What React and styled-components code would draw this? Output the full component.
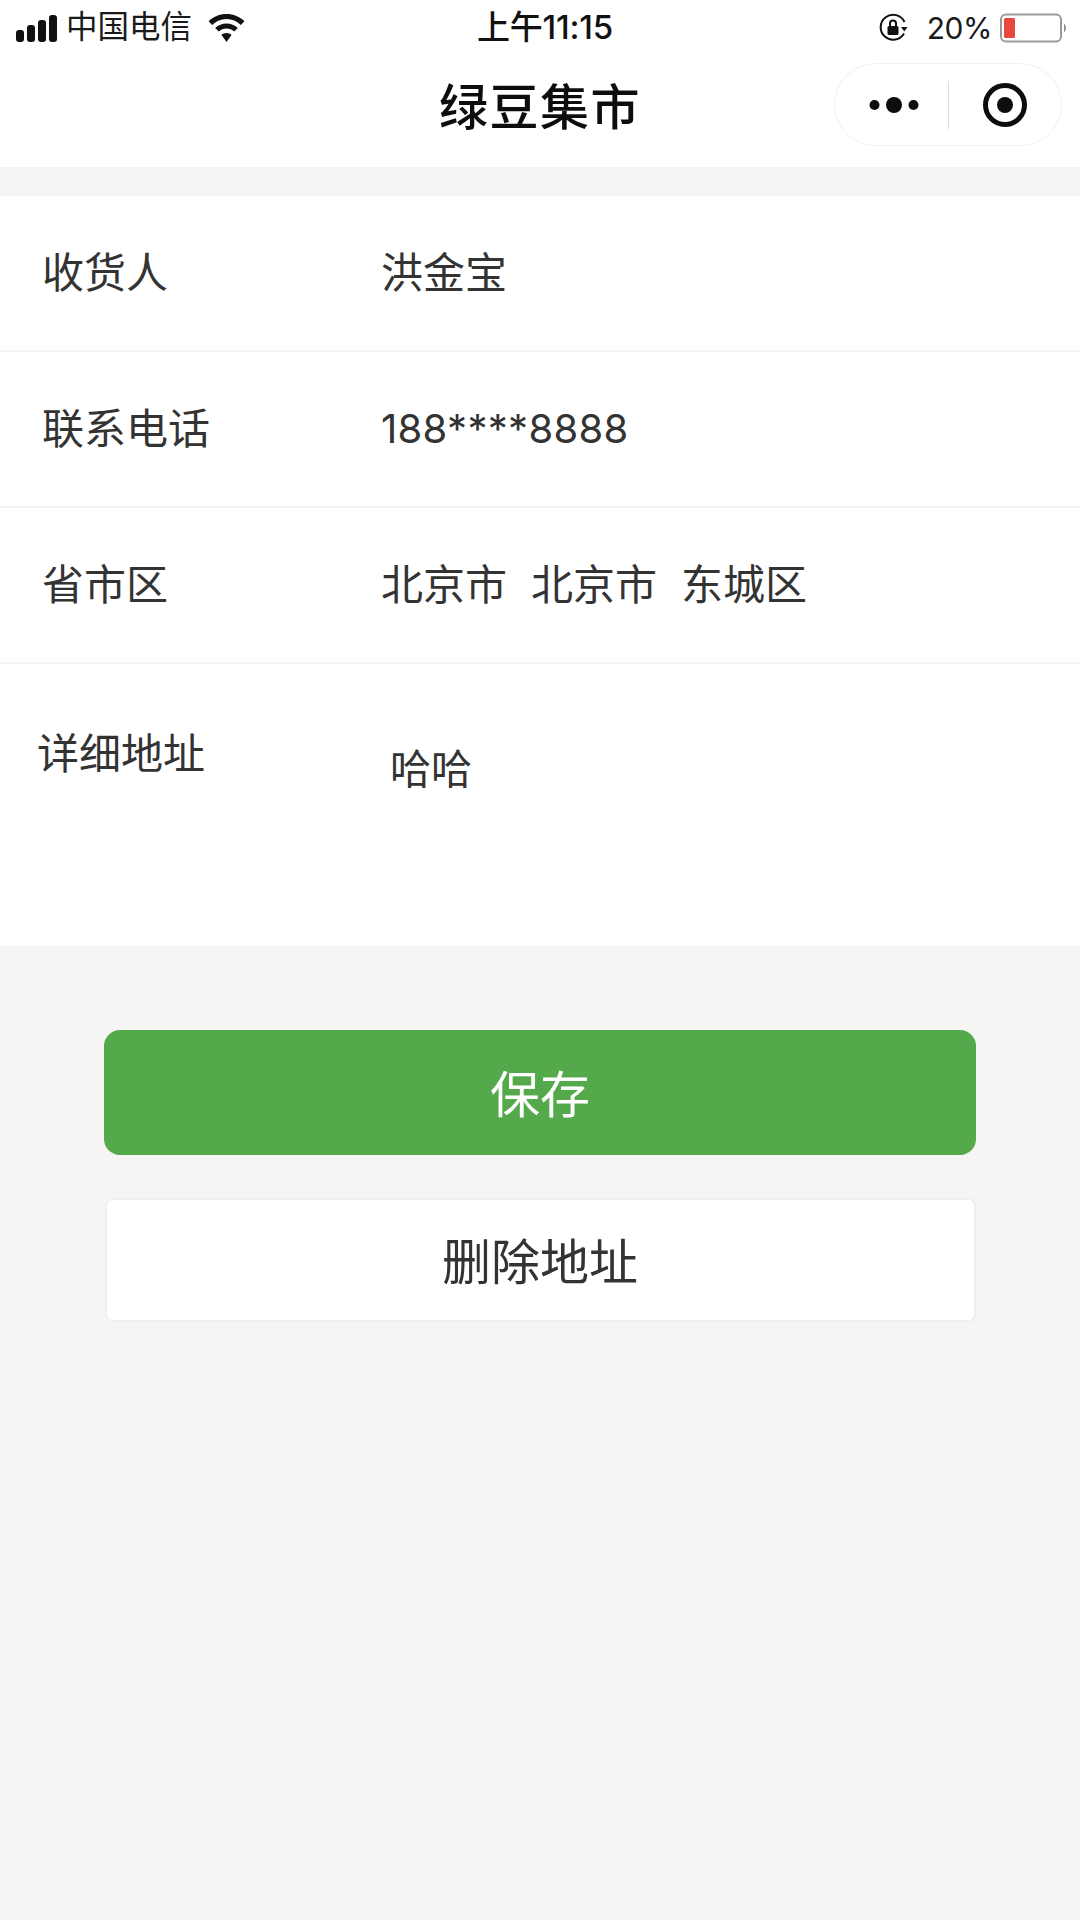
import React from "react";
import styled, { createGlobalStyle } from "styled-components";

const Global = createGlobalStyle`
  html, body { margin: 0; padding: 0; background: #f6f5f4; }
  body { font-family: "Liberation Sans", "Noto Sans CJK SC", sans-serif; }
`;
const Page = styled.div`
  width: 1080px; height: 1920px; background: #f6f5f4; overflow: hidden;
  display: flex; flex-direction: column;
`;
const Header = styled.header`
  background: #fff; height: 167px; display: flex; flex-direction: column;
`;
const StatusBar = styled.div`
  height: 56px; padding: 0 12px 0 16px; display: grid;
  grid-template-columns: 1fr auto 1fr; align-items: center; color: #111;
`;
const StatusLeft = styled.div`display: flex; align-items: center; gap: 9px;`;
const StatusRight = styled.div`display: flex; align-items: center; justify-content: flex-end;`;
const Carrier = styled.span`
  font: 400 31.5px/1 "Noto Sans CJK SC", sans-serif; margin: 0 7px 6px -1px; color: #1a1a1a;
`;
const Time = styled.span`
  font: 500 33px/1 "Inter", "Noto Sans CJK SC", sans-serif; letter-spacing: -0.2px;
  margin: 0 0 1px 6px;
`;
const Percent = styled.span`
  font: 400 30px/1 "Inter", sans-serif; margin: 0 8px 0 18px; color: #1a1a1a; letter-spacing: -0.5px;
`;
const NavBar = styled.div`
  flex: 1; display: grid; grid-template-columns: 1fr auto 1fr; align-items: center;
`;
const Title = styled.h1`
  grid-column: 2; margin: 0 0 16px; font: 500 49px/1 "Noto Sans CJK SC", sans-serif;
  letter-spacing: 1.5px; color: #0d0d0d;
`;
const Capsule = styled.div`
  grid-column: 3; justify-self: end; box-sizing: border-box; width: 228px; height: 83px;
  margin: 0 18px 14px 0; border: 1px solid #f1f1f1; border-radius: 42px; display: grid;
  grid-template-columns: 1fr 1px 1fr; align-items: center; justify-items: center;
`;
const DotsSlot = styled.div`display: flex; padding-left: 6px;`;
const CapsuleDivider = styled.div`width: 1px; height: 48px; background: #dcdcdc;`;
const Form = styled.section`background: #fff; margin-top: 29px; display: flex; flex-direction: column;`;
const Row = styled.div`
  box-sizing: border-box; height: 156px; display: flex; align-items: center; padding: 0 0 6px 42px;
  border-bottom: 2px solid #f5f4f4; font: 400 42px/1 "Noto Sans CJK SC", sans-serif; color: #333;
`;
const Label = styled.span`width: 339px; flex: none;`;
const Value = styled.span`display: flex; gap: 24px;`;
const Digits = styled.span`
  padding-top: 6px; font: 400 40px/1 "Inter", "Noto Sans", sans-serif; letter-spacing: 0.3px; color: #333;
`;
const AddressRow = styled.div`
  height: 282px; display: flex; align-items: flex-start; padding-left: 37px;
  font: 400 42px/1 "Noto Sans CJK SC", sans-serif; color: #333;
`;
const AddressLabel = styled.span`width: 353px; flex: none; margin-top: 66px;`;
const AddressValue = styled.span`margin-top: 82px; font-size: 41px;`;
const Actions = styled.div`
  display: flex; flex-direction: column; align-items: center; gap: 43px; margin-top: 84px;
`;
const Primary = styled.button`
  width: 872px; height: 125px; border: none; border-radius: 16px; background: #54a94b;
  color: #fff; font: 400 50px/1 "Noto Sans CJK SC", sans-serif; padding: 0 0 4px;
`;
const Secondary = styled.button`
  box-sizing: border-box; width: 871px; height: 124px; border: 2px solid #f0efef; border-radius: 8px;
  background: #fff; color: #333; font: 400 49px/1 "Noto Sans CJK SC", sans-serif; padding: 0 0 3px;
`;

const Signal = () => (
  <svg width="42" height="27" viewBox="0 0 42 27" fill="#111">
    <rect x="0" y="15" width="8" height="12" rx="3" />
    <rect x="11" y="10" width="8" height="17" rx="3" />
    <rect x="22" y="5" width="8" height="22" rx="3" />
    <rect x="33" y="0" width="8" height="27" rx="3" />
  </svg>
);
const Wifi = () => (
  <svg width="37" height="28" viewBox="0 0 37 28" fill="#111">
    <path d="M18.5 0C11.5 0 5.3 2.7.6 7.200l3.600 3.700C8 7.300 13 5.100 18.500 5.100s10.500 2.200 14.300 5.800l3.600-3.700C31.700 2.700 25.500 0 18.500 0z" />
    <path d="M18.500 9.500c-4.400 0-8.300 1.700-11.300 4.400l3.600 3.700c2-1.800 4.700-3 7.700-3s5.700 1.200 7.700 3l3.600-3.700c-3-2.700-6.900-4.400-11.300-4.400z" />
    <path d="M18.500 19c-2 0-3.600.7-5 1.900l5 7.100 5-7.100c-1.400-1.200-3-1.900-5-1.900z" />
  </svg>
);
const RotationLock = () => (
  <svg width="30" height="30" viewBox="0 0 30 30" fill="none">
    <path d="M25 20.500A12.500 12.500 0 1 1 25.500 9" stroke="#111" strokeWidth="2" />
    <path d="M22 14l6.500 0-3.200 4.500z" fill="#111" />
    <rect x="8.500" y="13" width="11" height="9" rx="1.500" fill="#111" />
    <path d="M11 13v-2.500a3 3 0 0 1 6 0V13" stroke="#111" strokeWidth="2" />
  </svg>
);
const Battery = () => (
  <svg width="68" height="30" viewBox="0 0 68 30" fill="none">
    <rect x="1" y="1.500" width="60" height="27" rx="5" fill="#fff" stroke="#9a9a9a" strokeWidth="2" />
    <rect x="4" y="5" width="11" height="20" rx="1.500" fill="#e8483d" />
    <path d="M64 11c2.500 1 2.500 7 0 8z" fill="#8a8a8a" />
  </svg>
);
const Dots = () => (
  <svg width="50" height="20" viewBox="0 0 50 20" fill="#0d0d0d">
    <circle cx="5.500" cy="10" r="5" />
    <circle cx="25" cy="10" r="8" />
    <circle cx="44.500" cy="10" r="5" />
  </svg>
);
const Target = () => (
  <svg width="46" height="46" viewBox="0 0 46 46" fill="none">
    <circle cx="23" cy="23" r="19.500" stroke="#0d0d0d" strokeWidth="5" />
    <circle cx="23" cy="23" r="8" fill="#0d0d0d" />
  </svg>
);

export default function App() {
  return (
    <Page>
      <Global />
      <Header>
        <StatusBar>
          <StatusLeft>
            <Signal />
            <Carrier>中国电信</Carrier>
            <Wifi />
          </StatusLeft>
          <Time>上午11:15</Time>
          <StatusRight>
            <RotationLock />
            <Percent>20%</Percent>
            <Battery />
          </StatusRight>
        </StatusBar>
        <NavBar>
          <Title>绿豆集市</Title>
          <Capsule>
            <DotsSlot><Dots /></DotsSlot>
            <CapsuleDivider />
            <Target />
          </Capsule>
        </NavBar>
      </Header>
      <Form>
        <Row>
          <Label>收货人</Label>
          <Value>洪金宝</Value>
        </Row>
        <Row>
          <Label>联系电话</Label>
          <Value><Digits>188****8888</Digits></Value>
        </Row>
        <Row>
          <Label>省市区</Label>
          <Value>
            <span>北京市</span>
            <span>北京市</span>
            <span>东城区</span>
          </Value>
        </Row>
        <AddressRow>
          <AddressLabel>详细地址</AddressLabel>
          <AddressValue>哈哈</AddressValue>
        </AddressRow>
      </Form>
      <Actions>
        <Primary>保存</Primary>
        <Secondary>删除地址</Secondary>
      </Actions>
    </Page>
  );
}
